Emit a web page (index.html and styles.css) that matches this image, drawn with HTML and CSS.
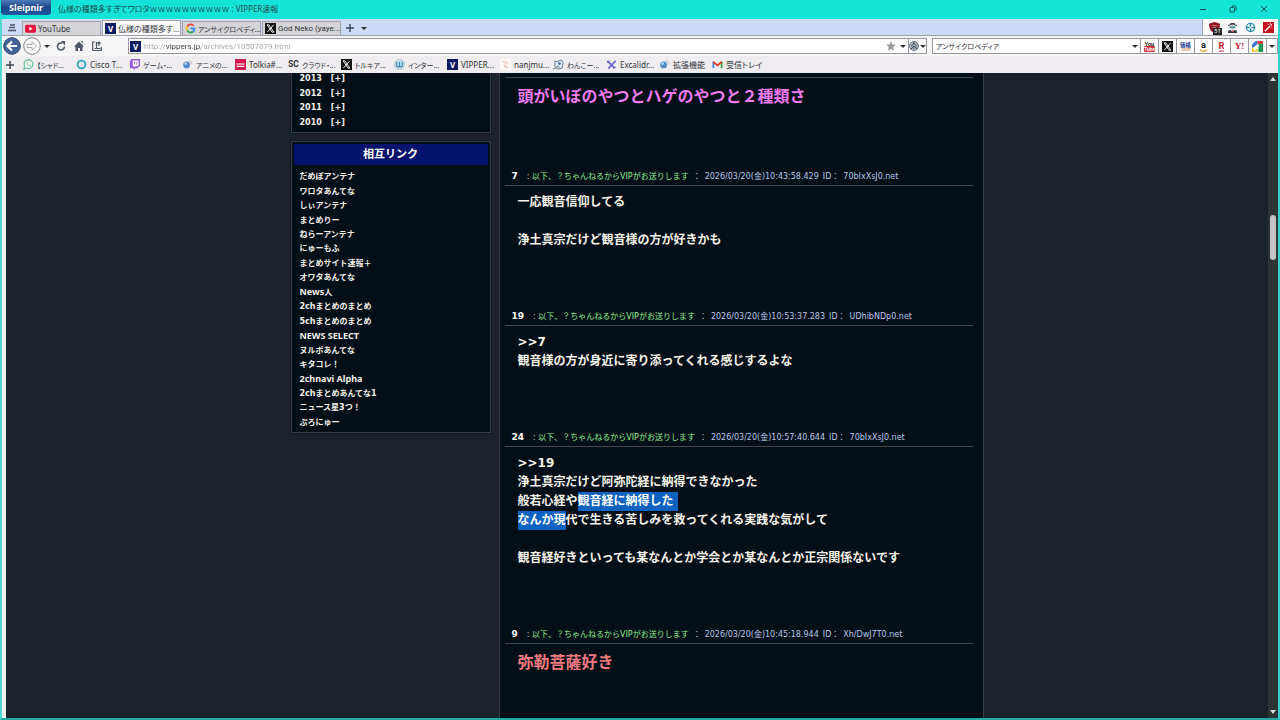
FILE: index.html
```html
<!DOCTYPE html>
<html lang="ja">
<head>
    <meta charset="UTF-8">
    <meta name="viewport" content="width=device-width, initial-scale=1.0">
    <title>仏様の種類多すぎてワロタｗｗｗｗｗｗｗｗｗｗ : VIPPER速報</title>
    <link rel="stylesheet" href="styles.css">
</head>
<body>
    <div class="window">
        <header class="title-bar">
            <button class="app-button">Sleipnir</button>
            <span class="window-title">仏様の種類多すぎてワロタｗｗｗｗｗｗｗｗｗｗ : VIPPER速報</span>
            <div class="window-controls">
                <button aria-label="最小化"><svg width="8" height="8" viewBox="0 0 8 8"><path d="M1 4.5h6" class="line"/></svg></button>
                <button aria-label="元に戻す"><svg width="8" height="8" viewBox="0 0 8 8"><rect x="1" y="2.5" width="4.5" height="4.5" rx="1" class="line"/><path d="M2.5 1h3.2q1.3 0 1.3 1.3v3.2" class="line"/></svg></button>
                <button aria-label="閉じる"><svg width="8" height="8" viewBox="0 0 8 8"><path d="M1 1l6 6M7 1l-6 6" class="line"/></svg></button>
            </div>
        </header>

        <div class="tab-bar">
            <button class="tab-tool" aria-label="タブ一覧"><svg width="10" height="10" viewBox="0 0 10 10"><path d="M3 2h5M2 4.5h6M1 7.5h8" stroke="#4c5666" stroke-width="1.3"/></svg></button>
            <button class="tab">
                <svg class="icon" viewBox="0 0 12 12"><rect x="0" y="2" width="12" height="8.5" rx="2" fill="#e3173e"/><path d="M4.7 4v4.5l3.6-2.2z" fill="#fff"/></svg>YouTube
            </button>
            <button class="tab active"><span class="icon v-icon">V</span>仏様の種類多す...</button>
            <button class="tab kana">
                <svg class="icon" viewBox="0 0 12 12" fill="none" stroke-width="2"><path d="M9.5 3A4.3 4.3 0 0 0 2.3 4" stroke="#e94235"/><path d="M2.3 4a4.3 4.3 0 0 0 0 4" stroke="#fbbc04"/><path d="M2.3 8a4.3 4.3 0 0 0 6.7 1.3" stroke="#34a853"/><path d="M9 9.3A4.3 4.3 0 0 0 10.3 6H6" stroke="#4285f4"/></svg>アンサイクロペディ...
            </button>
            <button class="tab roboto">
                <svg class="icon" viewBox="0 0 12 12"><path d="M0 0h12v12H0z" fill="#111"/><path d="M2.3 2h2l5.4 8h-2z" fill="none" stroke="#fff"/><path d="M9.5 2L2.5 10" stroke="#fff"/></svg>God Neko (yaye...
            </button>
            <button class="tab-tool" aria-label="新しいタブ"><svg width="10" height="10" viewBox="0 0 10 10"><path d="M5 1v8M1 5h8" stroke="#3a4656" stroke-width="1.4"/></svg></button>
            <button class="tab-arrow" aria-label="閉じたタブ"><i class="caret"></i></button>
            <div class="extensions">
                <button aria-label="広告ブロック" class="blocker"><svg class="icon" viewBox="0 0 12 12"><path d="M0 2l6-2 6 2q0 8-6 10Q0 10 0 2z" fill="#8c1020"/><path d="M3 4h6M4 6h4" stroke="#d98a90"/></svg><span class="badge">51</span></button>
                <button aria-label="エージェント"><svg class="icon" viewBox="0 0 12 12"><path d="M3 3l1-2h4l1 2h2v1H1V3z" fill="#353b42"/><circle cx="6" cy="5.7" r="3" fill="#ddd5ce"/><path d="M3 5h6v1.6H3z" fill="#2b8790"/><path d="M1 12q0-4 3-3l2 1.5L8 9q3-1 3 3z" fill="#353b42"/><path d="M5 9h2l-1 2z" fill="#d22a32"/></svg></button>
                <button aria-label="ツール"><svg class="icon" viewBox="0 0 12 12"><circle cx="6" cy="6" r="4.5" fill="none" stroke="#278da9" stroke-width="1.4"/><path d="M6 1v4M6 7v4M1 6h4M7 6h4" stroke="#278da9" stroke-width="1.5"/></svg></button>
                <button aria-label="ワンド"><svg class="icon" viewBox="0 0 12 12"><path d="M0 0h12v12H0z" fill="#c5101f"/><path d="M2 10l6-6" stroke="#fff" stroke-width="1.5"/><path d="M8 1v2M10 4h-1M5 2l1 1M10 2l-1 1M9 6l1 1" stroke="#fff"/></svg></button>
            </div>
        </div>

        <div class="nav-bar">
            <div class="nav-buttons">
                <button aria-label="戻る"><svg width="18" height="18" viewBox="0 0 18 18"><circle cx="9" cy="9" r="8.3" fill="#41639a" stroke="#2f4670"/><path d="M14 9H5M9 4.5L4.5 9 9 13.5" fill="none" stroke="#fff" stroke-width="2.2"/></svg></button>
                <button aria-label="進む"><svg width="18" height="18" viewBox="0 0 18 18"><circle cx="9" cy="9" r="8.3" fill="#f7f7f8" stroke="#88888d"/><path d="M4 7.5h5V4.8L13.5 9 9 13.2v-2.7H4z" fill="#fff" stroke="#aaaab0"/></svg></button>
                <button aria-label="履歴"><i class="caret"></i></button>
                <button aria-label="更新"><svg width="12" height="12" viewBox="0 0 12 12"><path d="M9.5 6.5A3.5 3.5 0 1 1 7.5 3.3" fill="none" stroke="#4d5665" stroke-width="1.6"/><path d="M6 1h4v4.5z" fill="#4d5665"/></svg></button>
                <button aria-label="ホーム"><svg width="12" height="12" viewBox="0 0 12 12"><path d="M1 6.5L6 1.5l5 5H9.5V11h-2.5V8H5v3H2.5V6.5z" fill="#4d5665"/><path d="M8 1h1.7v3" fill="#4d5665"/></svg></button>
                <button aria-label="保存"><svg width="12" height="12" viewBox="0 0 12 12"><path d="M4 2H1.7v8.5h8.6V7" fill="none" stroke="#4d5665" stroke-width="1.2"/><path d="M5.5 2v6M3.5 8.5h6M8 6V2M6.5 3.5L8 2l1.7 1.5" fill="none" stroke="#4d5665" stroke-width="1.2"/></svg></button>
            </div>
            <div class="address-box">
                <span class="icon v-icon">V</span>
                <input class="address roboto" type="text" aria-label="アドレス" value="http://vippers.jp/archives/10507879.html">
                <button class="star" aria-label="お気に入り"><svg width="10" height="10" viewBox="0 0 10 10"><path d="M5 0l1.4 3.4 3.6.3-2.8 2.4.9 3.7L5 7.8 1.9 9.8l.9-3.7L0 3.7l3.6-.3z" fill="#9a9a9e"/></svg></button>
                <button class="narrow" aria-label="お気に入り一覧"><i class="caret"></i></button>
                <button class="engine" aria-label="エンジン"><svg width="10" height="10" viewBox="0 0 10 10"><circle cx="5" cy="5" r="4.4" fill="#b8bec7" stroke="#5a6678"/><circle cx="5" cy="5" r="2.2" fill="none" stroke="#4b5a70"/><path d="M5 1v3M5 5l3 3M5 5L2 8" stroke="#4b5a70"/></svg><i class="caret"></i></button>
            </div>
            <div class="search-box">
                <input type="text" class="kana" aria-label="検索" value="アンサイクロペディア">
                <button class="narrow" aria-label="検索候補"><i class="caret"></i></button>
            </div>
            <div class="search-engines">
                <button aria-label="YouTube"><svg class="icon" viewBox="0 0 12 12"><text x="6" y="5" class="you">You</text><rect x="0" y="5.5" width="12" height="6.5" rx="1.5" fill="#d52d38"/><text x="6" y="11" class="tube">Tube</text></svg></button>
                <button aria-label="X"><svg class="icon" viewBox="0 0 12 12"><path d="M0 0h12v12H0z" fill="#111"/><path d="M2.3 2h2l5.4 8h-2z" fill="none" stroke="#fff"/><path d="M9.5 2L2.5 10" stroke="#fff"/></svg></button>
                <button aria-label="価格.com"><svg class="icon" viewBox="0 0 12 12"><text x="6" y="6" class="kakaku">価格</text><text x="6" y="11" class="com">.com</text></svg></button>
                <button aria-label="Amazon"><svg class="icon" viewBox="0 0 12 12"><text x="6" y="8" class="amazon">a</text><path d="M2 9.5q4 3 8 0" fill="none" stroke="#e7a62a" stroke-width="1.3"/></svg></button>
                <button aria-label="楽天"><svg class="icon" viewBox="0 0 12 12"><text x="6" y="9" class="rakuten">R</text><path d="M3 11h6" stroke="#bf1530"/></svg></button>
                <button aria-label="Yahoo"><svg class="icon" viewBox="0 0 12 12"><text x="6" y="9" class="yahoo">Y!</text></svg></button>
                <button aria-label="Google"><svg class="icon" viewBox="0 0 12 12"><path d="M0 4l4-4h2v7H0z" fill="#3873d0"/><path d="M6 0h6v4H6z" fill="#da4038"/><path d="M7 3h5v9H7z" fill="#1b9b52"/><path d="M0 8h6v4H0z" fill="#f3c52e"/><path d="M1 8l5-5 2 2-5 6z" fill="#fff"/></svg></button>
                <button class="more" aria-label="その他"><i class="caret"></i></button>
            </div>
        </div>

        <nav class="bookmark-bar">
            <button class="add-bookmark" aria-label="追加"><svg width="10" height="10" viewBox="0 0 10 10"><path d="M5 1v8M1 5h8" stroke="#3d4550" stroke-width="1.5"/></svg></button>
            <a href="#" class="kana"><svg class="icon" viewBox="0 0 12 12"><path d="M1 11l.8-3A4.8 4.8 0 1 1 4 10z" fill="#fff" stroke="#68c69b" stroke-width="1.4"/><path d="M4 4q0 3 4 4l1-1-2-1-1 .5L5 5V3z" fill="#68c69b"/></svg>【シャド...</a>
            <a href="#"><svg class="icon" viewBox="0 0 12 12"><circle cx="6" cy="6" r="4.3" fill="none" stroke="#2ca6c7" stroke-width="2"/></svg>Cisco T...</a>
            <a href="#" class="kana"><svg class="icon" viewBox="0 0 12 12"><path d="M3 0h9v7L9 10H7l-2 2v-2H1V2z" fill="#9558d9"/><path d="M4 1.5h6.5v5L9 8H7L5.5 9V8H4z" fill="#fff"/><path d="M6.2 3v3M8.7 3v3" stroke="#9558d9"/></svg>ゲーム・...</a>
            <a href="#" class="kana"><svg class="icon" viewBox="0 0 12 12"><circle cx="5" cy="6.5" r="3.7" fill="#5389c8"/><circle cx="4" cy="5" r="1.5" fill="#b8d9f4"/><path d="M7 2q4 0 3 4" fill="none" stroke="#b4bac2"/></svg>アニメの...</a>
            <a href="#"><svg class="icon" viewBox="0 0 12 12"><path d="M0 0h12v12H0z" fill="#d71b52"/><path d="M1.5 5.5h9M2 8h8" stroke="#fff" stroke-width="1.2"/></svg>Tolkia#...</a>
            <a href="#" class="kana"><svg class="icon" viewBox="0 0 12 12"><text x="6" y="9" class="sc">SC</text></svg>クラウド・...</a>
            <a href="#" class="kana"><svg class="icon" viewBox="0 0 12 12"><path d="M0 0h12v12H0z" fill="#111"/><path d="M2.3 2h2l5.4 8h-2z" fill="none" stroke="#fff"/><path d="M9.5 2L2.5 10" stroke="#fff"/></svg>トルキア...</a>
            <a href="#" class="kana"><svg class="icon" viewBox="0 0 12 12"><circle cx="6" cy="6" r="5.3" fill="#d7e7ef" stroke="#9db8c7"/><path d="M3 3v4q0 1.5 1.5 1.5T6 7V3v4q0 1.5 1.5 1.5T9 7V3" fill="none" stroke="#348fbd" stroke-width="1.4"/></svg>インター...</a>
            <a href="#"><span class="icon v-icon">V</span>VIPPER...</a>
            <a href="#"><svg class="icon" viewBox="0 0 12 12"><path d="M0 0h12v12H0z" fill="#faf7f4"/><path d="M3 3q4 0 3 3t3 3M4 7l2 2M7 3l2 2" fill="none" stroke="#dcae9e"/></svg>nanjmu...</a>
            <a href="#" class="kana"><svg class="icon" viewBox="0 0 12 12"><path d="M2 2l2 1 5-2 2 3-1 6-5 1-3-3z" fill="#dfe7f0" stroke="#617693"/><circle cx="7" cy="5" r="1.5" fill="#446fa8"/><path d="M0 11l4-2M4 8l3 1" stroke="#56677f"/></svg>わんこー...</a>
            <a href="#"><svg class="icon" viewBox="0 0 12 12"><path d="M1.5 2l8 8M10.5 2L2.5 10.5" stroke="#6962cc" stroke-width="1.8"/><path d="M1 4l3-2M8 10.5l3-2" stroke="#6962cc"/></svg>Excalidr...</a>
            <a href="#"><svg class="icon" viewBox="0 0 12 12"><circle cx="5" cy="6.5" r="3.7" fill="#5389c8"/><circle cx="4" cy="5" r="1.5" fill="#b8d9f4"/><path d="M7 2q4 0 3 4" fill="none" stroke="#b4bac2"/></svg>拡張機能</a>
            <a href="#"><svg class="icon" viewBox="0 0 12 12" fill="none" stroke-width="2"><path d="M1.5 10V3" stroke="#4285f4"/><path d="M10.5 10V3" stroke="#34a853"/><path d="M1.2 3L6 7l4.8-4" stroke="#e43d34"/></svg>受信トレイ</a>
        </nav>

        <div class="viewport">
            <div class="page">
                <div class="columns">
                    <aside class="sidebar">
                        <section class="side-box archive-box">
                            <ul class="archive-list">
                                <li>2013<a href="#">[+]</a></li>
                                <li>2012<a href="#">[+]</a></li>
                                <li>2011<a href="#">[+]</a></li>
                                <li>2010<a href="#">[+]</a></li>
                            </ul>
                        </section>
                        <section class="side-box">
                            <h2>相互リンク</h2>
                            <ul class="link-list">
                                <li><a href="#">だめぽアンテナ</a></li>
                                <li><a href="#">ワロタあんてな</a></li>
                                <li><a href="#">しぃアンテナ</a></li>
                                <li><a href="#">まとめりー</a></li>
                                <li><a href="#">ねらーアンテナ</a></li>
                                <li><a href="#">にゅーもふ</a></li>
                                <li><a href="#">まとめサイト速報＋</a></li>
                                <li><a href="#">オワタあんてな</a></li>
                                <li><a href="#"><span class="latin">News</span>人</a></li>
                                <li><a href="#">2chまとめのまとめ</a></li>
                                <li><a href="#">5chまとめのまとめ</a></li>
                                <li><a href="#" class="latin">NEWS SELECT</a></li>
                                <li><a href="#">ヌルポあんてな</a></li>
                                <li><a href="#">キタコレ！</a></li>
                                <li><a href="#" class="latin">2chnavi Alpha</a></li>
                                <li><a href="#">2chまとめあんてな1</a></li>
                                <li><a href="#">ニュース星3つ！</a></li>
                                <li><a href="#">ぷろにゅー</a></li>
                            </ul>
                        </section>
                    </aside>

                    <main class="thread">
                        <article class="post">
                            <div class="post-body continued">
                                <p class="big magenta">頭がいぼのやつとハゲのやつと２種類さ</p>
                            </div>
                        </article>
                        <article class="post">
                            <div class="post-head"><b>7</b><span>:</span> <span class="name">以下、？ちゃんねるからVIPがお送りします</span><span class="date">：</span><span class="date">2026/03/20(金)10:43:58.429</span><span class="id">ID：</span><span class="id">70bIxXsJ0.net</span></div>
                            <div class="post-body">
                                <p>一応観音信仰してる<br><br>浄土真宗だけど観音様の方が好きかも</p>
                            </div>
                        </article>
                        <article class="post">
                            <div class="post-head"><b>19</b><span>:</span> <span class="name">以下、？ちゃんねるからVIPがお送りします</span><span class="date">：</span><span class="date">2026/03/20(金)10:53:37.283</span><span class="id">ID：</span><span class="id">UDhibNDp0.net</span></div>
                            <div class="post-body">
                                <p>&gt;&gt;7<br>観音様の方が身近に寄り添ってくれる感じするよな</p>
                            </div>
                        </article>
                        <article class="post">
                            <div class="post-head"><b>24</b><span>:</span> <span class="name">以下、？ちゃんねるからVIPがお送りします</span><span class="date">：</span><span class="date">2026/03/20(金)10:57:40.644</span><span class="id">ID：</span><span class="id">70bIxXsJ0.net</span></div>
                            <div class="post-body">
                                <p>&gt;&gt;19<br>浄土真宗だけど阿弥陀経に納得できなかった<br>般若心経や<mark class="line-end">観音経に納得した</mark><br><mark>なんか現</mark>代で生きる苦しみを救ってくれる実践な気がして<br><br>観音経好きといっても某なんとか学会とか某なんとか正宗関係ないです</p>
                            </div>
                        </article>
                        <article class="post">
                            <div class="post-head"><b>9</b><span>:</span> <span class="name">以下、？ちゃんねるからVIPがお送りします</span><span class="date">：</span><span class="date">2026/03/20(金)10:45:18.944</span><span class="id">ID：</span><span class="id">Xh/DwJ7T0.net</span></div>
                            <div class="post-body">
                                <p class="big salmon">弥勒菩薩好き</p>
                            </div>
                        </article>
                    </main>
                </div>
            </div>
            <div class="scrollbar">
                <i class="arrow-up"></i>
                <div class="track"><div class="thumb"></div></div>
                <i class="arrow-down"></i>
            </div>
        </div>
    </div>
</body>
</html>
```

FILE: styles.css
```css
* {
    box-sizing: border-box;
}
html, body {
    height: 100%;
    margin: 0;
    overflow: hidden;
}
body {
    font-family: "Noto Sans", "Noto Sans CJK JP", sans-serif;
    font-size: 8px;
    color: #30343a;
}
button, input {
    margin: 0;
    padding: 0;
    border: none;
    background: none;
    font: inherit;
    color: inherit;
    outline: none;
}
button {
    display: flex;
    align-items: center;
    justify-content: center;
}
a {
    color: inherit;
    text-decoration: none;
}
ul {
    margin: 0;
    padding: 0;
    list-style: none;
}
svg {
    display: block;
    flex-shrink: 0;
    overflow: visible;
}
.window {
    display: flex;
    flex-direction: column;
    height: 100%;
    border: 2px solid #20aaa4;
    border-top: none;
    border-left-color: #52d8d2;
    border-right-color: #35d0cc;
    background-color: #f0eef0;
}

/* Title bar */
.title-bar {
    display: flex;
    align-items: flex-start;
    height: 19px;
    margin: 0 -2px;
    background-color: #14e3d7;
}
.app-button {
    width: 50px;
    height: 15px;
    margin-left: 1px;
    border-radius: 0 0 3px 3px;
    background: linear-gradient(#4d7ab8, #1e4587 50%, #1b5aa2);
    color: #ffffff;
    font-size: 9px;
    font-weight: bold;
}
.window-title {
    flex: 1;
    margin-left: 7px;
    line-height: 18px;
    color: #174e50;
    font-feature-settings: "palt";
}
.window-controls {
    display: flex;
}
.window-controls button {
    width: 30px;
    height: 18px;
}
.window-controls button:last-child {
    width: 32px;
}
.line {
    fill: none;
    stroke: #174e50;
    stroke-width: 1;
}

/* Tabs */
.icon {
    width: 11px;
    height: 11px;
    flex-shrink: 0;
}
.v-icon {
    background-color: #0c1c62;
    color: #ffffff;
    font-size: 8px;
    font-weight: bold;
    line-height: 11px;
    text-align: center;
}
.caret {
    border: 3px solid transparent;
    border-top-color: #30343a;
    border-bottom: none;
}
.tab-bar {
    display: flex;
    align-items: flex-end;
    height: 17px;
    padding-left: 1px;
    background-color: #cddaf5;
    border-bottom: 1px solid #a0a2aa;
}
.tab-tool {
    width: 18px;
    height: 14px;
}
.tab {
    justify-content: flex-start;
    gap: 2px;
    width: 79px;
    height: 14px;
    margin-left: 1px;
    padding: 0 2px;
    border: 1px solid #a3a5ab;
    border-bottom: none;
    background-color: #d5d5d7;
    white-space: nowrap;
    font-feature-settings: "palt";
}
.tab.active {
    height: 15px;
    background-color: #fafafa;
}
.roboto {
    font-family: Roboto, "Noto Sans", sans-serif;
}
.kana {
    font-size: 7px;
}
.tab-arrow {
    width: 10px;
    height: 14px;
}
.extensions {
    display: flex;
    align-self: stretch;
    align-items: center;
    gap: 7px;
    margin-left: auto;
    padding: 0 4px 0 6px;
    border-left: 1px solid #a3a5ab;
    background-color: #fafafa;
}
.blocker {
    position: relative;
}
.badge {
    position: absolute;
    right: -2px;
    bottom: -2px;
    padding: 0 1px;
    background-color: #222222;
    color: #ffffff;
    font-size: 6px;
    line-height: 7px;
}

/* Address and search */
.nav-bar {
    display: flex;
    align-items: center;
    height: 20px;
    background-color: #f7f6f7;
}
.nav-buttons {
    display: flex;
    gap: 2px;
    width: 126px;
    padding-left: 1px;
}
.nav-buttons button:nth-child(3) {
    width: 8px;
}
.nav-buttons button:nth-child(n+4) {
    width: 16px;
}
.address-box,
.search-box {
    display: flex;
    align-items: center;
    height: 16px;
    border: 1px solid #9a989c;
    background-color: #ffffff;
}
.address-box {
    flex: 1;
    padding-left: 1px;
}
.address-box button {
    width: 14px;
    height: 14px;
}
.address-box .engine {
    gap: 1px;
    width: 18px;
    border-left: 1px solid #9a989c;
}
.address {
    flex: 1;
    margin-left: 3px;
    color: transparent;
    /* host part is darker than the rest of the address */
    background: linear-gradient(90deg, #a5a5a8 22px, #3c3c40 22px, #3c3c40 57px, #a5a5a8 57px);
    background-clip: text;
    -webkit-background-clip: text;
}
.search-box {
    width: 209px;
    margin-left: 5px;
    padding-left: 3px;
}
.search-box input {
    flex: 1;
    min-width: 0;
    font-feature-settings: "palt";
}
.address-box .narrow,
.search-box .narrow {
    width: 10px;
}
.search-engines {
    display: flex;
    height: 16px;
    border: 1px solid #9a989c;
    border-left: none;
    background-color: #ffffff;
}
.search-engines button {
    width: 18px;
    border-right: 1px solid #9a989c;
}
.search-engines .more {
    width: 10px;
    border-right: none;
}
.you, .tube, .kakaku, .com, .amazon, .rakuten, .yahoo, .sc {
    font-family: Roboto, "Noto Sans CJK JP", sans-serif;
    font-weight: bold;
    text-anchor: middle;
}
.you {
    font-size: 6px;
    fill: #222222;
}
.tube {
    font-size: 5px;
    fill: #ffffff;
}
.kakaku {
    font-size: 6px;
    fill: #20318e;
}
.com {
    font-size: 5px;
    fill: #d6a26b;
}
.amazon {
    font-size: 10px;
    fill: #222222;
}
.rakuten {
    font-size: 10px;
    fill: #bf1530;
}
.yahoo {
    font-family: "Liberation Serif", serif;
    font-size: 10px;
    fill: #c81436;
}
.sc {
    font-size: 9px;
    fill: #333333;
}

/* Bookmarks */
.bookmark-bar {
    display: flex;
    align-items: center;
    height: 17px;
    padding-left: 3px;
    background-color: #efedef;
}
.add-bookmark {
    width: 10px;
    margin-right: 8px;
}
.bookmark-bar a {
    display: flex;
    align-items: center;
    gap: 3px;
    width: 53px;
    white-space: nowrap;
    font-feature-settings: "palt";
}

/* Web page */
.viewport {
    display: flex;
    flex: 1;
    min-height: 0;
    border-left: 4px solid #f2f0f2;
}
.page {
    flex: 1;
    overflow: hidden;
    background-color: #1b222c;
    font-family: "DejaVu Sans", "Noto Sans CJK JP", sans-serif;
}
.columns {
    display: flex;
    gap: 8px;
    width: 693px;
    min-height: 100%;
    margin: 0 auto;
}
.sidebar {
    width: 200px;
    color: #f4f1ea;
    font-weight: bold;
}
.side-box {
    margin-bottom: 8px;
    padding: 2px;
    border: 1px solid #343d44;
    background-color: #020f17;
    box-shadow: 0 0 0 1px #141a22;
}
.archive-box {
    margin-top: -1px;
    border-top: none;
    padding-top: 0;
}
.side-box h2 {
    margin: 0 0 5px;
    background-color: #03126a;
    color: #ffffff;
    font-size: 11px;
    line-height: 21px;
    text-align: center;
}
.archive-list,
.link-list {
    display: grid;
    grid-auto-rows: 1fr;
    align-items: center;
    padding-left: 6px;
    line-height: 14px;
}
.archive-list {
    min-height: 58px;
}
.archive-list a {
    margin-left: 9px;
}
.link-list {
    min-height: 260px;
    line-height: 12px;
}
.latin {
    font-family: "Noto Sans", sans-serif;
    font-size: 9px;
}
.thread {
    flex: 1;
    padding: 4px 10px 0 5px;
    border: 1px solid #343d4a;
    border-top: none;
    border-bottom: none;
    background-color: #020f17;
}
.post {
    margin-bottom: 58px;
}
.post-head {
    padding-left: 7px;
    border-bottom: 1px solid #44484c;
    color: #c9d4cc;
    line-height: 17px;
    white-space: nowrap;
}
.post-head b {
    margin-right: 9px;
    color: #ffffff;
    font-size: 9px;
}
.name {
    color: #90ee90;
}
.date {
    margin-left: 4px;
    color: #b9c6e8;
}
.id {
    margin-left: 4px;
    color: #b9c6e8;
}
.post-body {
    padding: 7px 0 0 13px;
    color: #f7f3ea;
    font-size: 12px;
    font-weight: bold;
    line-height: 19px;
}
.post-body.continued {
    border-top: 1px solid #44484c;
}
.post-body p {
    margin: 0;
}
.post-body .big {
    padding-bottom: 2px;
    font-size: 16px;
    line-height: 23px;
}
.magenta {
    color: #f37cf3;
}
.salmon {
    color: #f47a80;
}
mark {
    display: inline-block;
    height: 19px;
    background-color: #0c62c0;
    color: #ffffff;
    vertical-align: top;
}
.line-end {
    padding-right: 4px;
}

/* Scrollbar */
.scrollbar {
    display: flex;
    flex-direction: column;
    align-items: center;
    width: 10px;
    padding: 4px 0;
    background-color: #2d3436;
}
.arrow-up,
.arrow-down {
    border: 3px solid transparent;
}
.arrow-up {
    border-top: none;
    border-bottom: 4px solid #d8d8d8;
}
.arrow-down {
    border-bottom: none;
    border-top: 4px solid #d8d8d8;
}
.track {
    flex: 1;
    padding-top: 134px;
}
.thumb {
    width: 6px;
    height: 45px;
    border-radius: 3px;
    background-color: #c4c3c3;
}
```
